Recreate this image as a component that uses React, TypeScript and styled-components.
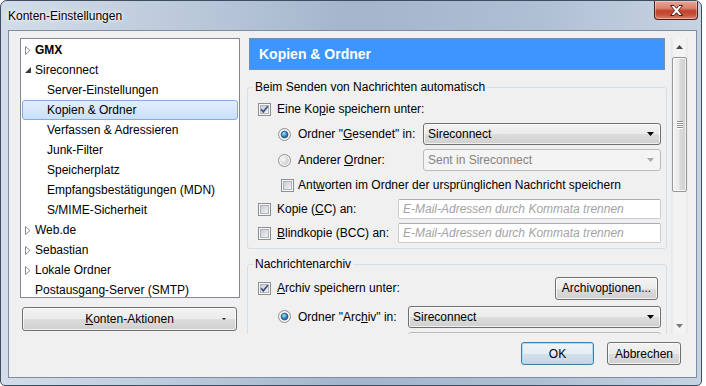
import React from 'react';
import styled, { createGlobalStyle } from 'styled-components';

const GlobalStyle = createGlobalStyle`
  html, body { margin: 0; padding: 0; background: #ffffff; }
  body {
    font-family: "Liberation Sans", Arial, sans-serif;
    font-size: 12px;
    color: #000;
  }
  * { box-sizing: border-box; }
`;

// Window frame
const Window = styled.div`
  width: 702px;
  height: 386px;
  border: 1px solid #3f4d60;
  border-radius: 7px 7px 5px 5px;
  background: linear-gradient(90deg, #d3dde9 0%, #bccadb 25%, #a4b5cc 50%, #aebed3 75%, #c6d3e2 100%);
  display: flex;
  flex-direction: column;
  overflow: hidden;
`;

const TitleBar = styled.div`
  height: 29px;
  display: flex;
  align-items: flex-start;
  padding: 0 3px 0 7px;
`;

const TitleText = styled.span`
  margin-top: 7px;
  line-height: 16px;
  color: #000;
  text-shadow: 0 0 6px #ffffff, 0 0 3px #ffffff;
`;

const CloseButton = styled.div`
  margin-left: auto;
  width: 44px;
  height: 19px;
  border: 1px solid #47211c;
  border-top: none;
  border-radius: 0 0 4px 4px;
  background: linear-gradient(180deg, #e8a697 0%, #d98170 40%, #c3402a 55%, #c9553d 80%, #de8a6f 100%);
  box-shadow: inset 0 0 0 1px rgba(255, 255, 255, 0.35);
  display: flex;
  align-items: center;
  justify-content: center;
`;

const Client = styled.div`
  flex: 1;
  margin: 0 4px 7px 7px;
  border: 1px solid #7f8da0;
  background: #f0f0f0;
  display: flex;
  flex-direction: column;
  padding: 7px 7px 0 11px;
`;

const Body = styled.div`
  display: flex;
  height: 296px;
`;

const LeftColumn = styled.div`
  width: 220px;
  display: flex;
  flex-direction: column;
`;

const TreeBox = styled.div`
  height: 260px;
  border: 1px solid #828790;
  background: #ffffff;
  padding: 1px 1px 0 1px;
  overflow: hidden;
`;

const TreeRow = styled.div<{ $indent: number; $selected?: boolean; $bold?: boolean }>`
  height: 20px;
  display: flex;
  align-items: center;
  padding-left: ${({ $indent }) => $indent}px;
  border: 1px solid ${({ $selected }) => ($selected ? '#84acdd' : 'transparent')};
  border-radius: 3px;
  background: ${({ $selected }) =>
    $selected ? 'linear-gradient(180deg, #e3eefc 0%, #c9dffb 100%)' : 'transparent'};
  font-weight: ${({ $bold }) => ($bold ? 700 : 400)};
  white-space: nowrap;
`;

const Twisty = styled.span`
  width: 10px;
  display: flex;
  align-items: center;
`;

const ActionsButton = styled.div`
  margin: 9px 3px 0 2px;
  height: 24px;
  display: flex;
  align-items: center;
  justify-content: center;
  position: relative;
  border: 1px solid #707070;
  border-radius: 3px;
  background: linear-gradient(180deg, #f2f2f2 0%, #ebebeb 50%, #dddddd 51%, #cfcfcf 100%);
  box-shadow: inset 0 0 0 1px rgba(255, 255, 255, 0.7);
`;

const MenuMarker = styled.span`
  position: absolute;
  right: 10px;
  top: 10px;
  width: 0;
  height: 0;
  border-left: 2px solid transparent;
  border-right: 2px solid transparent;
  border-top: 2px solid #222;
`;

const RightPanel = styled.div`
  width: 442px;
  margin-left: 7px;
  display: flex;
`;

const ScrollContent = styled.div`
  flex: 1;
  overflow: hidden;
  display: flex;
  flex-direction: column;
`;

const Header = styled.div`
  height: 32px;
  margin: 0 6px 0 2px;
  flex-shrink: 0;
  background: #3d96fd;
  border: 1px solid #6f8fb3;
  display: flex;
  align-items: center;
  padding-left: 9px;
  color: #ffffff;
  font-weight: 700;
  font-size: 14px;
`;

const Group = styled.fieldset<{ $top: number }>`
  margin: ${({ $top }) => $top}px 4px 0 0;
  padding: 0 5px 3px 0;
  border: 1px solid #d5dfe5;
  border-radius: 3px;
  flex-shrink: 0;
  min-width: 0;
`;

const Legend = styled.legend`
  margin-left: 5px;
  padding: 0 2px;
  line-height: 16px;
`;

const GroupBody = styled.div<{ $top: number }>`
  padding: ${({ $top }) => $top}px 0 0 10px;
  display: flex;
  flex-direction: column;
`;

const Row = styled.div<{ $height: number; $indent?: number; $align?: string }>`
  height: ${({ $height }) => $height}px;
  display: flex;
  align-items: ${({ $align }) => $align || 'center'};
  padding-left: ${({ $indent }) => $indent || 0}px;
  white-space: nowrap;
`;

const LabelCell = styled.div<{ $width?: number }>`
  display: flex;
  align-items: center;
  width: ${({ $width }) => ($width ? `${$width}px` : 'auto')};
  flex-shrink: 0;
`;

const Mark = styled.span<{ $gap: number }>`
  display: inline-flex;
  margin-right: ${({ $gap }) => $gap}px;
`;

const Key = styled.u`
  text-decoration: underline;
  text-underline-offset: 1px;
`;

const Select = styled.div<{ $disabled?: boolean }>`
  flex: 1;
  height: 22px;
  display: flex;
  align-items: center;
  justify-content: space-between;
  padding: 0 6px 0 4px;
  border: 1px solid ${({ $disabled }) => ($disabled ? '#b8bcc0' : '#707070')};
  border-radius: 3px;
  color: ${({ $disabled }) => ($disabled ? '#838383' : '#000')};
  background: ${({ $disabled }) =>
    $disabled
      ? '#f4f4f4'
      : 'linear-gradient(180deg, #f2f2f2 0%, #ebebeb 50%, #dddddd 51%, #cfcfcf 100%)'};
  box-shadow: ${({ $disabled }) => ($disabled ? 'none' : 'inset 0 0 0 1px rgba(255,255,255,0.7)')};
`;

const TextField = styled.div`
  flex: 1;
  height: 20px;
  display: flex;
  align-items: center;
  padding-left: 4px;
  background: #ffffff;
  border: 1px solid #c9ccd2;
  border-top-color: #abadb3;
  border-radius: 2px;
  color: #a3a3a3;
  font-style: italic;
`;

const Button = styled.div<{ $width: number; $default?: boolean }>`
  width: ${({ $width }) => $width}px;
  height: 23px;
  display: flex;
  align-items: center;
  justify-content: center;
  border: 1px solid ${({ $default }) => ($default ? '#3c7fb1' : '#707070')};
  border-radius: 3px;
  background: ${({ $default }) =>
    $default
      ? 'linear-gradient(180deg, #eef4f8 0%, #e4eef4 50%, #d3e1ea 51%, #c6d7e2 100%)'
      : 'linear-gradient(180deg, #f2f2f2 0%, #ebebeb 50%, #dddddd 51%, #cfcfcf 100%)'};
  box-shadow: ${({ $default }) =>
    $default ? 'inset 0 0 0 1px #a6dcf7' : 'inset 0 0 0 1px rgba(255,255,255,0.7)'};
`;

const RowButton = styled(Button)`
  margin-left: auto;
  margin-right: 3px;
`;

const ScrollBar = styled.div`
  width: 17px;
  margin-right: 1px;
  display: flex;
  flex-direction: column;
  align-items: center;
  background: linear-gradient(90deg, #e6e6e6 0%, #f3f3f3 20%, #f3f3f3 80%, #e9e9e9 100%);
`;

const ArrowBox = styled.div`
  height: 17px;
  width: 17px;
  display: flex;
  align-items: center;
  justify-content: center;
  flex-shrink: 0;
`;

const Thumb = styled.div`
  margin-top: 2px;
  width: 15px;
  height: 135px;
  border: 1px solid #979797;
  border-radius: 2px;
  background: linear-gradient(90deg, #f3f3f3 0%, #eaeaea 45%, #d9d9d9 55%, #d0d0d0 100%);
  box-shadow: inset 0 0 0 1px rgba(255, 255, 255, 0.7);
  display: flex;
  flex-direction: column;
  align-items: center;
  justify-content: center;
  gap: 1px;
`;

const Grip = styled.span`
  width: 6px;
  height: 1px;
  background: #8c8c8c;
  box-shadow: 0 1px 0 #ffffff;
`;

const Spacer = styled.div`
  flex: 1;
`;

const Footer = styled.div`
  display: flex;
  justify-content: flex-end;
  gap: 13px;
  margin-top: 8px;
  padding-right: 8px;
`;

function CheckBox({ checked }: { checked?: boolean }) {
  return (
    <svg width="13" height="13" viewBox="0 0 13 13">
      <defs>
        <linearGradient id="cbFill" x1="0" y1="0" x2="1" y2="1">
          <stop offset="0" stopColor="#c6cad0" />
          <stop offset="1" stopColor="#f5f5f6" />
        </linearGradient>
      </defs>
      <rect x="0.5" y="0.5" width="12" height="12" fill="#f6f6f6" stroke="#8e8f8f" />
      <rect x="2.5" y="2.5" width="8" height="8" fill="url(#cbFill)" stroke="#b0b4ba" />
      {checked && (
        <path d="M3.2 6.3 L5.3 8.8 L9.8 3.3" stroke="#3d5289" strokeWidth="1.7" fill="none" />
      )}
    </svg>
  );
}

function Radio({ checked }: { checked?: boolean }) {
  return (
    <svg width="13" height="13" viewBox="0 0 13 13">
      <defs>
        <radialGradient id="rbFill" cx="0.35" cy="0.35" r="0.8">
          <stop offset="0" stopColor="#f8f8f8" />
          <stop offset="1" stopColor="#c3c7cc" />
        </radialGradient>
        <radialGradient id="rbDot" cx="0.4" cy="0.35" r="0.7">
          <stop offset="0" stopColor="#a9e6ff" />
          <stop offset="0.5" stopColor="#3f9ad8" />
          <stop offset="1" stopColor="#154a80" />
        </radialGradient>
      </defs>
      <circle cx="6.5" cy="6.5" r="6" fill="#f4f4f4" stroke="#8e8f8f" />
      <circle cx="6.5" cy="6.5" r="4.2" fill="url(#rbFill)" />
      {checked && <circle cx="6.5" cy="6.5" r="3.3" fill="url(#rbDot)" stroke="#1c3f66" strokeWidth="0.7" />}
    </svg>
  );
}

function DropArrow({ disabled }: { disabled?: boolean }) {
  return (
    <svg width="7" height="4" viewBox="0 0 7 4">
      <path d="M0 0 H7 L3.5 4 Z" fill={disabled ? '#a8a8a8' : '#000'} />
    </svg>
  );
}

function TwistyIcon({ open }: { open?: boolean }) {
  return open ? (
    <svg width="6" height="6" viewBox="0 0 6 6">
      <path d="M6 0 V6 H0 Z" fill="#3c3c3c" />
    </svg>
  ) : (
    <svg width="6" height="9" viewBox="0 0 6 9">
      <path d="M0.5 0.5 L5 4.5 L0.5 8.5 Z" fill="#ffffff" stroke="#8c8c8c" />
    </svg>
  );
}

type TreeItem = { label: string; level: number; twisty?: 'open' | 'closed'; bold?: boolean; selected?: boolean };

const treeItems: TreeItem[] = [
  { label: 'GMX', level: 0, twisty: 'closed', bold: true },
  { label: 'Sireconnect', level: 0, twisty: 'open' },
  { label: 'Server-Einstellungen', level: 1 },
  { label: 'Kopien & Ordner', level: 1, selected: true },
  { label: 'Verfassen & Adressieren', level: 1 },
  { label: 'Junk-Filter', level: 1 },
  { label: 'Speicherplatz', level: 1 },
  { label: 'Empfangsbestätigungen (MDN)', level: 1 },
  { label: 'S/MIME-Sicherheit', level: 1 },
  { label: 'Web.de', level: 0, twisty: 'closed' },
  { label: 'Sebastian', level: 0, twisty: 'closed' },
  { label: 'Lokale Ordner', level: 0, twisty: 'closed' },
  { label: 'Postausgang-Server (SMTP)', level: 0 },
];

export default function App() {
  return (
    <>
      <GlobalStyle />
      <Window>
        <TitleBar>
          <TitleText>Konten-Einstellungen</TitleText>
          <CloseButton>
            <svg width="13" height="11" viewBox="0 0 13 11">
              <path
                d="M0.5 0.5 H4 L6.5 3.3 L9 0.5 H12.5 L8.4 5.5 L12.5 10.5 H9 L6.5 7.7 L4 10.5 H0.5 L4.6 5.5 Z"
                fill="#ffffff"
                stroke="#4a2018"
                strokeWidth="1"
              />
            </svg>
          </CloseButton>
        </TitleBar>

        <Client>
          <Body>
            <LeftColumn>
              <TreeBox>
                {treeItems.map((item) => (
                  <TreeRow
                    key={item.label}
                    $indent={item.level === 1 ? 24 : item.twisty ? 2 : 12}
                    $selected={item.selected}
                    $bold={item.bold}
                  >
                    {item.twisty && (
                      <Twisty>
                        <TwistyIcon open={item.twisty === 'open'} />
                      </Twisty>
                    )}
                    <span>{item.label}</span>
                  </TreeRow>
                ))}
              </TreeBox>
              <ActionsButton>
                <span>
                  <Key>K</Key>onten-Aktionen
                </span>
                <MenuMarker />
              </ActionsButton>
            </LeftColumn>

            <RightPanel>
              <ScrollContent>
                <Header>Kopien &amp; Ordner</Header>

                <Group $top={9}>
                  <Legend>Beim Senden von Nachrichten automatisch</Legend>
                  <GroupBody $top={2}>
                    <Row $height={24}>
                      <Mark $gap={6}><CheckBox checked /></Mark>
                      <span>Eine Ko<Key>p</Key>ie speichern unter:</span>
                    </Row>
                    <Row $height={26} $indent={20}>
                      <LabelCell $width={145}>
                        <Mark $gap={7}><Radio checked /></Mark>
                        <span>Ordner "<Key>G</Key>esendet" in:</span>
                      </LabelCell>
                      <Select>
                        <span>Sireconnect</span>
                        <DropArrow />
                      </Select>
                    </Row>
                    <Row $height={26} $indent={20}>
                      <LabelCell $width={145}>
                        <Mark $gap={7}><Radio /></Mark>
                        <span>Anderer <Key>O</Key>rdner:</span>
                      </LabelCell>
                      <Select $disabled>
                        <span>Sent in Sireconnect</span>
                        <DropArrow disabled />
                      </Select>
                    </Row>
                    <Row $height={24} $indent={23}>
                      <Mark $gap={4}><CheckBox /></Mark>
                      <span>Ant<Key>w</Key>orten im Ordner der ursprünglichen Nachricht speichern</span>
                    </Row>
                    <Row $height={24}>
                      <LabelCell $width={140}>
                        <Mark $gap={6}><CheckBox /></Mark>
                        <span>Kopie (<Key>C</Key>C) an:</span>
                      </LabelCell>
                      <TextField>E-Mail-Adressen durch Kommata trennen</TextField>
                    </Row>
                    <Row $height={24}>
                      <LabelCell $width={140}>
                        <Mark $gap={6}><CheckBox /></Mark>
                        <span><Key>B</Key>lindkopie (BCC) an:</span>
                      </LabelCell>
                      <TextField>E-Mail-Adressen durch Kommata trennen</TextField>
                    </Row>
                  </GroupBody>
                </Group>

                <Group $top={7}>
                  <Legend>Nachrichtenarchiv</Legend>
                  <GroupBody $top={3}>
                    <Row $height={26}>
                      <Mark $gap={6}><CheckBox checked /></Mark>
                      <span><Key>A</Key>rchiv speichern unter:</span>
                      <RowButton $width={103}>
                        <span>
                          Archivop<Key>t</Key>ionen...
                        </span>
                      </RowButton>
                    </Row>
                    <Row $height={31} $indent={20}>
                      <LabelCell $width={130}>
                        <Mark $gap={7}><Radio checked /></Mark>
                        <span>Ordner "Arc<Key>h</Key>iv" in:</span>
                      </LabelCell>
                      <Select>
                        <span>Sireconnect</span>
                        <DropArrow />
                      </Select>
                    </Row>
                    <Row $height={26} $indent={150} $align="flex-start">
                      <Select $disabled />
                    </Row>
                  </GroupBody>
                </Group>
              </ScrollContent>

              <ScrollBar>
                <ArrowBox>
                  <svg width="7" height="4" viewBox="0 0 7 4">
                    <path d="M0 4 H7 L3.5 0 Z" fill="#4a4a4a" />
                  </svg>
                </ArrowBox>
                <Thumb>
                  <Grip />
                  <Grip />
                  <Grip />
                  <Grip />
                </Thumb>
                <Spacer />
                <ArrowBox>
                  <svg width="7" height="4" viewBox="0 0 7 4">
                    <path d="M0 0 H7 L3.5 4 Z" fill="#7a7a7a" />
                  </svg>
                </ArrowBox>
              </ScrollBar>
            </RightPanel>
          </Body>

          <Footer>
            <Button $width={73} $default>OK</Button>
            <Button $width={74}>Abbrechen</Button>
          </Footer>
        </Client>
      </Window>
    </>
  );
}
